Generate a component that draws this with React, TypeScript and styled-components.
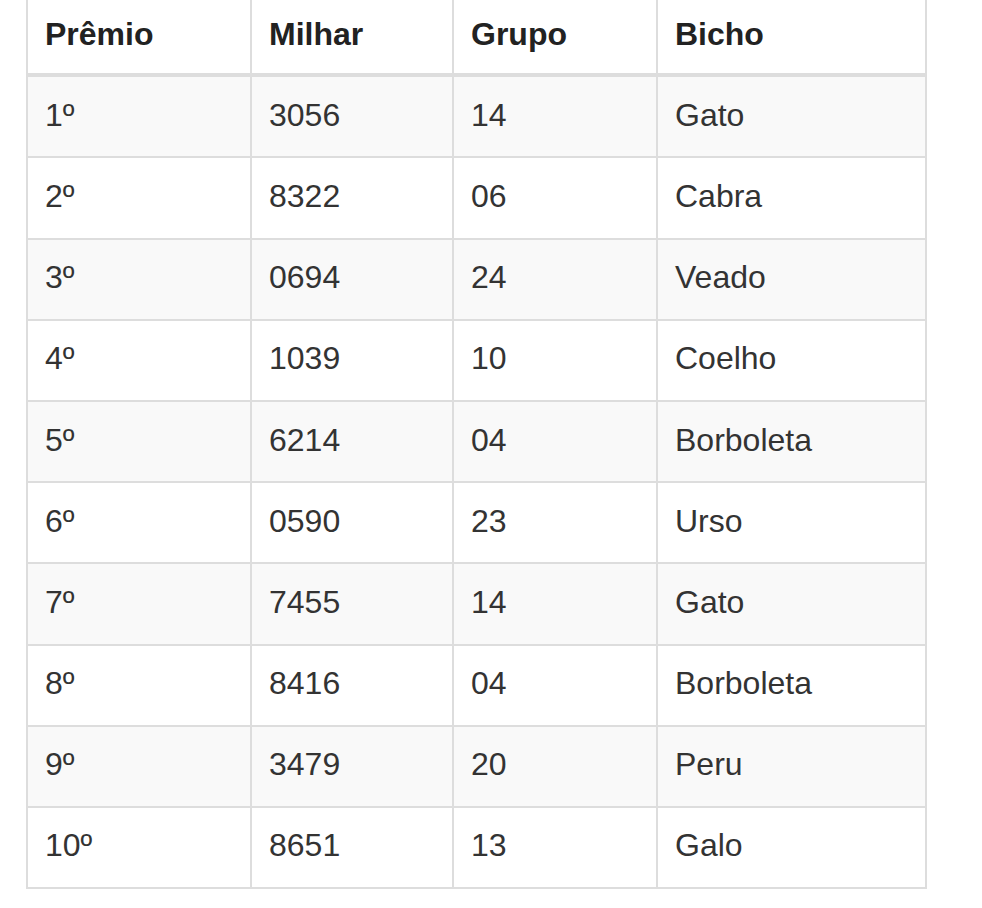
import styled, { createGlobalStyle } from "styled-components";

const GlobalStyle = createGlobalStyle`
  html, body {
    margin: 0;
    padding: 0;
    background: #fff;
  }
  body {
    font-family: "Liberation Sans", Arial, sans-serif;
    color: #333;
  }
`;

const Page = styled.div`
  padding-left: 26px;
  width: 899px;
`;

const Table = styled.table`
  margin-top: -8px;
  width: 899px;
  border-collapse: collapse;
  border: 2px solid #ddd;
  table-layout: fixed;
  font-size: 32px;
  line-height: 44px;
`;

const Col = styled.col<{ $width: number }>`
  width: ${(p) => p.$width}px;
`;

const HeadCell = styled.th`
  text-align: left;
  font-weight: bold;
  color: #222;
  padding: 17.6px 17px;
  border: 2px solid #ddd;
  border-bottom-width: 4px;
`;

const Row = styled.tr<{ $striped: boolean }>`
  background: ${(p) => (p.$striped ? "#f9f9f9" : "#fff")};
`;

const Cell = styled.td`
  padding: 15.6px 17px 19.6px;
  border: 2px solid #ddd;
  vertical-align: top;
`;

const columns = [
  { label: "Prêmio", width: 224 },
  { label: "Milhar", width: 202 },
  { label: "Grupo", width: 204 },
  { label: "Bicho", width: 269 },
];

const results = [
  ["1º", "3056", "14", "Gato"],
  ["2º", "8322", "06", "Cabra"],
  ["3º", "0694", "24", "Veado"],
  ["4º", "1039", "10", "Coelho"],
  ["5º", "6214", "04", "Borboleta"],
  ["6º", "0590", "23", "Urso"],
  ["7º", "7455", "14", "Gato"],
  ["8º", "8416", "04", "Borboleta"],
  ["9º", "3479", "20", "Peru"],
  ["10º", "8651", "13", "Galo"],
];

export default function App() {
  return (
    <>
      <GlobalStyle />
      <Page>
        <Table>
          <colgroup>
            {columns.map((c) => (
              <Col key={c.label} $width={c.width} />
            ))}
          </colgroup>
          <thead>
            <tr>
              {columns.map((c) => (
                <HeadCell key={c.label}>{c.label}</HeadCell>
              ))}
            </tr>
          </thead>
          <tbody>
            {results.map((r, i) => (
              <Row key={r[0]} $striped={i % 2 === 0}>
                {r.map((v, j) => (
                  <Cell key={j}>{v}</Cell>
                ))}
              </Row>
            ))}
          </tbody>
        </Table>
      </Page>
    </>
  );
}
